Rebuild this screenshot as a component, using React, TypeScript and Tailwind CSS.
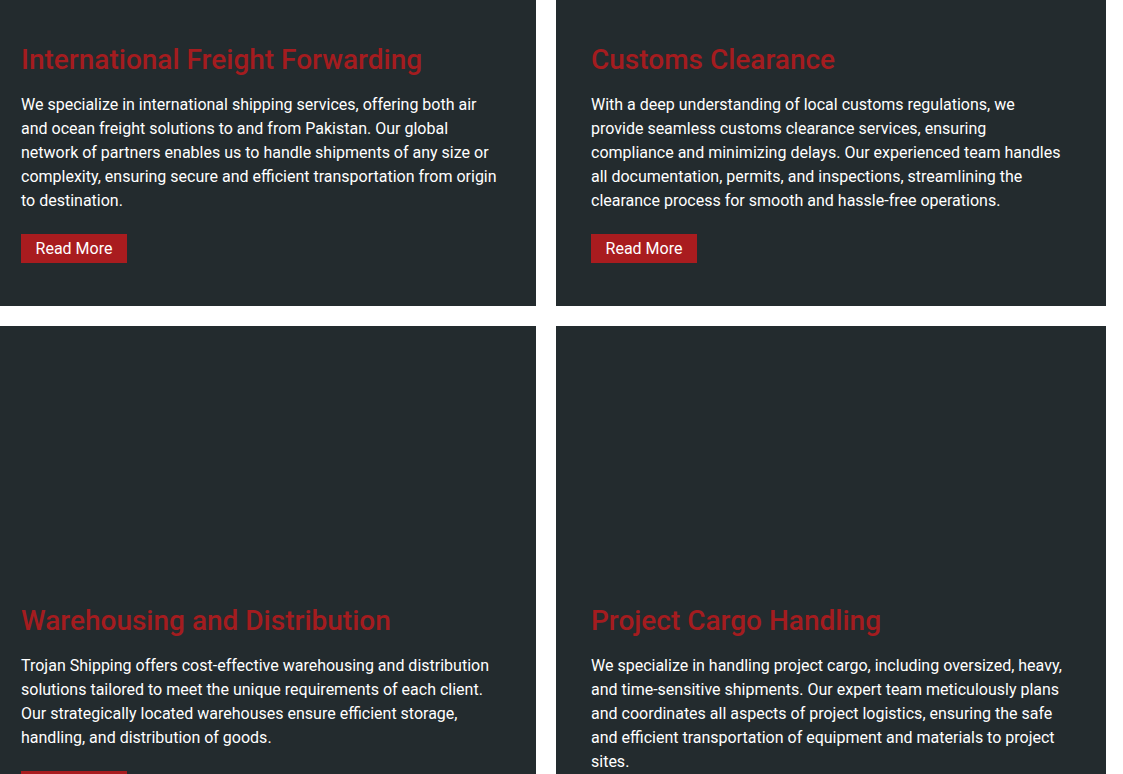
import React from 'react';

type Service = {
  title: string;
  body: string;
};

const services: Service[] = [
  {
    title: 'International Freight Forwarding',
    body: 'We specialize in international shipping services, offering both air and ocean freight solutions to and from Pakistan. Our global network of partners enables us to handle shipments of any size or complexity, ensuring secure and efficient transportation from origin to destination.',
  },
  {
    title: 'Customs Clearance',
    body: 'With a deep understanding of local customs regulations, we provide seamless customs clearance services, ensuring compliance and minimizing delays. Our experienced team handles all documentation, permits, and inspections, streamlining the clearance process for smooth and hassle-free operations.',
  },
  {
    title: 'Warehousing and Distribution',
    body: 'Trojan Shipping offers cost-effective warehousing and distribution solutions tailored to meet the unique requirements of each client. Our strategically located warehouses ensure efficient storage, handling, and distribution of goods.',
  },
  {
    title: 'Project Cargo Handling',
    body: 'We specialize in handling project cargo, including oversized, heavy, and time-sensitive shipments. Our expert team meticulously plans and coordinates all aspects of project logistics, ensuring the safe and efficient transportation of equipment and materials to project sites.',
  },
];

function ServiceCard({ service, index }: { service: Service; index: number }) {
  // 左列内边距较小，下排卡片顶部留出图片区域
  const left = index % 2 === 0;
  const lower = index >= 2;
  return (
    <div
      className={`bg-[#232b2e] pb-[43px] ${left ? 'pl-[21px] pr-[34px]' : 'px-[35px]'} ${lower ? 'pt-[278.6px]' : 'pt-[43px]'}`}
    >
      <h3 className="text-[28px] leading-[1.2] font-medium text-[#a41c1f] mb-4">
        {service.title}
      </h3>
      <p className="text-base leading-6 text-white">{service.body}</p>
      <a
        href="#"
        className="mt-[21px] inline-flex h-[29px] w-[106px] items-center justify-center bg-[#a91c1f] pt-px text-base text-white"
      >
        Read More
      </a>
    </div>
  );
}

export default function App() {
  return (
    <main
      className="min-h-screen bg-white"
      style={{ fontFamily: 'Roboto, "Noto Sans", sans-serif' }}
    >
      <div className="grid grid-cols-[536px_550px] gap-5">
        {services.map((service, i) => (
          <ServiceCard key={service.title} service={service} index={i} />
        ))}
      </div>
    </main>
  );
}
